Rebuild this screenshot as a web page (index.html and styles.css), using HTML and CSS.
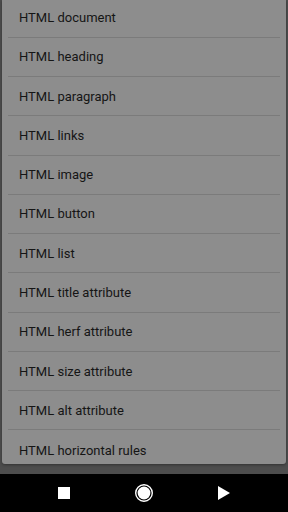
FILE: index.html
```html
<!DOCTYPE html>
<html lang="en">
<head>
    <meta charset="UTF-8">
    <meta name="viewport" content="width=device-width, initial-scale=1.0">
    <title>HTML Topics</title>
    <link rel="stylesheet" href="styles.css">
</head>
<body>
    <div class="screen">
        <!-- Topic dialog -->
        <div class="dialog">
            <ul class="topic-list">
                <li class="topic">HTML document</li>
                <li class="topic">HTML heading</li>
                <li class="topic">HTML paragraph</li>
                <li class="topic">HTML links</li>
                <li class="topic">HTML image</li>
                <li class="topic">HTML button</li>
                <li class="topic">HTML list</li>
                <li class="topic">HTML title attribute</li>
                <li class="topic">HTML herf attribute</li>
                <li class="topic">HTML size attribute</li>
                <li class="topic">HTML alt attribute</li>
                <li class="topic last">HTML horizontal rules</li>
            </ul>
        </div>

        <!-- Navigation bar -->
        <nav class="navbar">
            <div class="nav-item">
                <svg width="14" height="14" viewBox="0 0 14 14">
                    <rect x="1" y="1" width="12" height="12" fill="#fff"/>
                </svg>
            </div>
            <div class="nav-item">
                <svg width="20" height="20" viewBox="0 0 20 20">
                    <circle cx="10" cy="10" r="8.3" fill="none" stroke="#fff" stroke-width="1.4"/>
                    <circle cx="10" cy="10" r="6.4" fill="#fff"/>
                </svg>
            </div>
            <div class="nav-item">
                <svg width="16" height="16" viewBox="0 0 16 16">
                    <path d="M2 1 L14 8 L2 15 Z" fill="#fff"/>
                </svg>
            </div>
        </nav>
    </div>
</body>
</html>
```

FILE: styles.css
```css
* {
    margin: 0;
    padding: 0;
    box-sizing: border-box;
}

body {
    background-color: #4d4d4d;
    font-family: Roboto, "Noto Sans", sans-serif;
}

.screen {
    width: 288px;
    height: 512px;
    display: flex;
    flex-direction: column;
    overflow: hidden;
}

.dialog {
    margin: 0 2px;
    height: 464px;
    background-color: #8d8d8d;
    border-radius: 0 0 3px 3px;
    box-shadow: 0 1px 3px rgba(0,0,0,0.35);
    overflow: hidden;
}

.topic-list {
    list-style: none;
    margin-top: -1.5px;
}

.topic {
    height: 39.27px;
    margin: 0 6px;
    padding-left: 11px;
    display: flex;
    align-items: center;
    font-size: 13px;
    color: #151515;
    border-bottom: 1px solid #7b7b7b;
}

.topic.last {
    border-bottom: none;
}

.navbar {
    margin-top: auto;
    height: 38px;
    background-color: #000;
    display: flex;
    align-items: center;
    padding: 0 24px;
}

.nav-item {
    width: 80px;
    display: flex;
    justify-content: center;
}

.nav-item svg {
    display: block;
}
```
